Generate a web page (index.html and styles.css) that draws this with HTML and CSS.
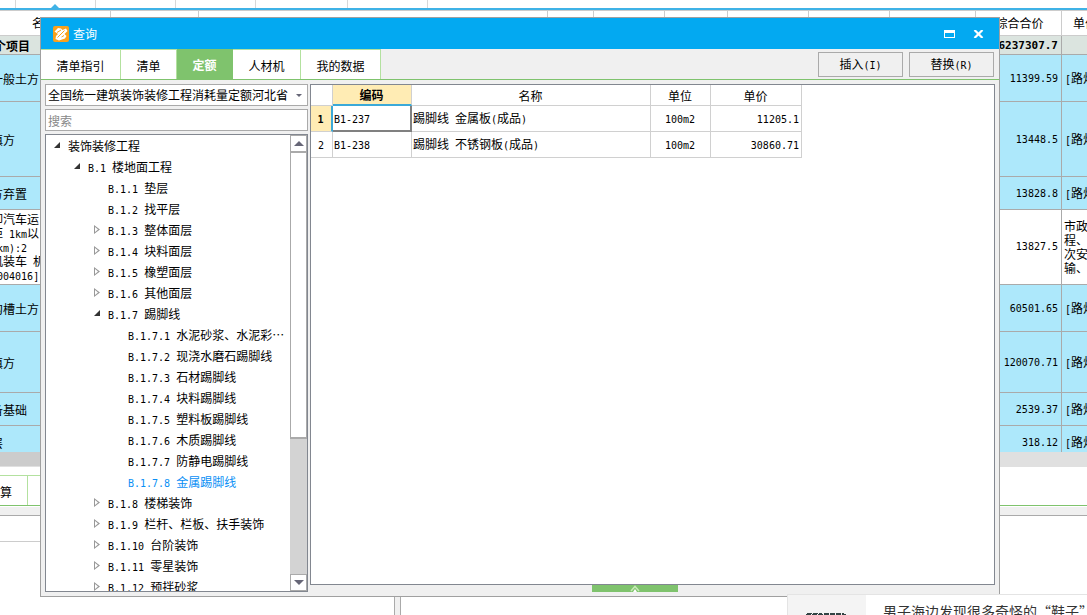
FILE: index.html
```html
<!DOCTYPE html>
<html lang="zh-CN">
<head>
<meta charset="utf-8">
<title>查询</title>
<link rel="stylesheet" href="styles.css">
</head>
<body>
<main class="app">
  <div class="app-tabs"><span class="w16"></span><span class="w80"></span><span class="w80"></span><span class="w80"></span><span class="w92"></span><span class="w80"></span>
    <svg class="app-marker" width="8" height="4" viewBox="0 0 8 4"><path d="M4 0L8 4H0z" fill="#3fb2e6"/></svg>
  </div>
  <table class="sheet">
    <colgroup><col class="c-name"><col class="c-88"><col class="c-wide"><col class="c-46"><col class="c-71"><col class="c-63"><col class="c-81"><col class="c-81"><col class="c-86"><col class="c-86"><col></colgroup>
    <thead><tr class="h25"><th class="name-head">名称</th><th></th><th></th><th></th><th></th><th></th><th></th><th></th><th></th><th class="sum-head">综合合价</th><th class="last-head">单价</th></tr></thead>
    <tbody>
      <tr class="h19 total"><td>个项目</td><td colspan="8"></td><td class="num">6237307.7</td><td></td></tr>
      <tr class="h47"><td>一般土方</td><td colspan="8"></td><td class="num">11399.59</td><td class="cost"><span class="m">[</span>路灯</td></tr>
      <tr class="h75"><td>填方</td><td colspan="8"></td><td class="num">13448.5</td><td class="cost"><span class="m">[</span>路灯</td></tr>
      <tr class="h33"><td>方弃置</td><td colspan="8"></td><td class="num">13828.8</td><td class="cost"><span class="m">[</span>路灯</td></tr>
      <tr class="h75 plain"><td><div>卸汽车运</div><div>距<span class="m"> 1km</span>以</div><div><span class="m">&nbsp;km):2</span></div><div>机装车<span class="m"> </span>机</div><div><span class="m">&nbsp;004016]</span></div></td><td colspan="8"></td><td class="num">13827.5</td><td class="cost"><div>市政</div><div>程、</div><div>次安</div><div>输、</div></td></tr>
      <tr class="h47"><td>沟槽土方</td><td colspan="8"></td><td class="num">60501.65</td><td class="cost"><span class="m">[</span>路灯</td></tr>
      <tr class="h61"><td>填方</td><td colspan="8"></td><td class="num">120070.71</td><td class="cost"><span class="m">[</span>路灯</td></tr>
      <tr class="h33"><td>备基础</td><td colspan="8"></td><td class="num">2539.37</td><td class="cost"><span class="m">[</span>路灯</td></tr>
      <tr class="h26"><td>层</td><td colspan="8"></td><td class="num">318.12</td><td class="cost"><span class="m">[</span>路灯</td></tr>
    </tbody>
  </table>
  <div class="sheet-scroll"><span></span></div>
  <div class="lower-tabs"><button type="button">算</button><span></span></div>
  <div class="lower-bar"></div>
  <div class="lower">
    <div class="lower-left"><div class="lower-head"></div></div>
    <div class="splitter"></div>
    <div class="lower-right"></div>
  </div>
</main>

<section class="dialog" role="dialog" aria-labelledby="dialog-title">
  <header class="titlebar">
    <svg width="16" height="16" viewBox="0 0 16 16"><rect width="16" height="16" rx="2" fill="#f9a11b"/><path d="M1.500 5.500L5 2L8 2.500L9.500 4L13 2.500L14.500 5L11.500 8L13.500 10L12 12.500L6 14.500L2.500 13L3 10L5 8z" fill="#fff"/><path d="M4 6.500L8 4M4.500 11.500L11.500 4.500M8.500 11L11 9.500" stroke="#f9a11b" fill="none"/></svg>
    <h1 id="dialog-title">查询</h1>
    <button type="button" class="win" aria-label="最大化"><svg width="11" height="8" viewBox="0 0 11 8"><path d="M0 0H11V8H0zM1 3V7H10V3z" fill="#fff" fill-rule="evenodd"/></svg></button>
    <button type="button" class="win close" aria-label="关闭"><svg width="11" height="8" viewBox="0 0 11 8"><path d="M1.500 0L9.500 8M9.500 0L1.500 8" stroke="#fff" stroke-width="2.200"/></svg></button>
  </header>
  <nav class="tabs">
    <button type="button" class="t80">清单指引</button><button type="button" class="t56">清单</button><button type="button" class="t56 active">定额</button><button type="button" class="t68">人材机</button><button type="button" class="t80">我的数据</button>
    <div class="actions"><button type="button">插入<span class="m">(I)</span></button><button type="button">替换<span class="m">(R)</span></button></div>
  </nav>
  <div class="content">
    <aside class="side">
      <div class="combo">
        <select aria-label="定额库"><option>全国统一建筑装饰装修工程消耗量定额河北省</option></select>
        <svg width="6" height="3" viewBox="0 0 6 3"><path d="M0 0H6L3 3z" fill="#667"/></svg>
      </div>
      <input class="search" type="text" placeholder="搜索" aria-label="搜索">
      <div class="tree-box">
        <ul class="tree">
          <li class="l0 open">装饰装修工程</li>
          <li class="l1 open"><span class="m">B.1 </span>楼地面工程</li>
          <li class="l2"><span class="m">B.1.1 </span>垫层</li>
          <li class="l2"><span class="m">B.1.2 </span>找平层</li>
          <li class="l2 shut"><span class="m">B.1.3 </span>整体面层</li>
          <li class="l2 shut"><span class="m">B.1.4 </span>块料面层</li>
          <li class="l2 shut"><span class="m">B.1.5 </span>橡塑面层</li>
          <li class="l2 shut"><span class="m">B.1.6 </span>其他面层</li>
          <li class="l2 open"><span class="m">B.1.7 </span>踢脚线</li>
          <li class="l3"><span class="m">B.1.7.1 </span>水泥砂浆、水泥彩…</li>
          <li class="l3"><span class="m">B.1.7.2 </span>现浇水磨石踢脚线</li>
          <li class="l3"><span class="m">B.1.7.3 </span>石材踢脚线</li>
          <li class="l3"><span class="m">B.1.7.4 </span>块料踢脚线</li>
          <li class="l3"><span class="m">B.1.7.5 </span>塑料板踢脚线</li>
          <li class="l3"><span class="m">B.1.7.6 </span>木质踢脚线</li>
          <li class="l3"><span class="m">B.1.7.7 </span>防静电踢脚线</li>
          <li class="l3 current"><span class="m">B.1.7.8 </span>金属踢脚线</li>
          <li class="l2 shut"><span class="m">B.1.8 </span>楼梯装饰</li>
          <li class="l2 shut"><span class="m">B.1.9 </span>栏杆、栏板、扶手装饰</li>
          <li class="l2 shut"><span class="m">B.1.10 </span>台阶装饰</li>
          <li class="l2 shut"><span class="m">B.1.11 </span>零星装饰</li>
          <li class="l2 shut"><span class="m">B.1.12 </span>预拌砂浆</li>
        </ul>
        <div class="scrollbar">
          <button type="button" aria-label="向上"><svg width="10" height="5" viewBox="0 0 10 5"><path d="M5 0L10 5H0z" fill="#667"/></svg></button>
          <div class="thumb"></div>
          <div class="track"></div>
          <button type="button" aria-label="向下"><svg width="10" height="5" viewBox="0 0 10 5"><path d="M0 0H10L5 5z" fill="#667"/></svg></button>
        </div>
      </div>
    </aside>
    <div class="main">
      <div class="results">
        <table class="grid">
          <colgroup><col class="g22"><col class="g79"><col class="g239"><col class="g60"><col class="g91"></colgroup>
          <thead><tr><th></th><th class="picked">编码</th><th>名称</th><th>单位</th><th>单价</th></tr></thead>
          <tbody>
            <tr><th class="row-on"><span class="m">1</span></th><td class="cell-on"><span class="m">B1-237</span></td><td>踢脚线<span class="m"> </span>金属板<span class="m">(</span>成品<span class="m">)</span></td><td class="mid"><span class="m">100m2</span></td><td class="right"><span class="m">11205.1</span></td></tr>
            <tr><th><span class="m">2</span></th><td><span class="m">B1-238</span></td><td>踢脚线<span class="m"> </span>不锈钢板<span class="m">(</span>成品<span class="m">)</span></td><td class="mid"><span class="m">100m2</span></td><td class="right"><span class="m">30860.71</span></td></tr>
          </tbody>
        </table>
      </div>
      <button type="button" class="handle" aria-label="展开"><svg width="10" height="7" viewBox="0 0 10 7"><path d="M1 6L5 1.500L9 6" fill="none" stroke="#c8eab8" stroke-width="1.500"/><path d="M5 4L7 7H3z" fill="#fff"/></svg></button>
    </div>
  </div>
</section>

<aside class="news">
  <div class="thumbnail"><svg width="40" height="2" viewBox="0 0 40 2"><path d="M1 .5H6M7 .5H16M18 .5H38M0 1.500H40" stroke="#344" stroke-dasharray="5 1"/></svg></div>
  <a href="#">男子海边发现很多奇怪的“鞋子”</a>
</aside>
</body>
</html>
```
FILE: styles.css
```css
* { box-sizing: border-box; }
html, body { height: 100%; }
body { margin: 0; overflow: hidden; position: relative; background: #fff; color: #000; font: 12px/14px "Noto Sans CJK SC", sans-serif; }
button, input, select { font: inherit; color: inherit; margin: 0; padding: 0; border: 0; border-radius: 0; background: none; }
svg { display: block; flex: none; }
.m, .num { font-family: "DejaVu Sans Mono", monospace; font-size: 10px; white-space: pre; }

.app { height: 100%; display: flex; flex-direction: column; overflow: hidden; }
.app-tabs { position: relative; display: flex; flex: none; height: 11px; border-bottom: 1px solid #ccc; }
.app-tabs::after { content: ""; position: absolute; left: 0; right: 0; top: 8px; height: 2px; background: #3fb2e6; }
.app-tabs span { border-right: 1px solid #d8d8d8; }
.w16 { width: 16px; }
.w80 { width: 80px; }
.w92 { width: 92px; }
.app-marker { position: absolute; left: 51px; top: 4px; }

.sheet { table-layout: fixed; width: 100%; flex: none; border-collapse: separate; border-spacing: 0; }
.sheet th, .sheet td { padding: 0; border-right: 1px solid #aaa; border-bottom: 1px solid #aaa; overflow: hidden; white-space: nowrap; text-align: left; vertical-align: middle; }
.sheet th { font-weight: 400; border-color: #ccc; }
.sheet td { background: #ade8fb; padding-top: 2px; }
.sheet th:last-child, .sheet td:last-child { border-right: 0; }
.sheet td:first-child { text-indent: -9px; }
.sheet .num { text-align: right; padding-right: 3px; }
.sheet .cost { padding-left: 3px; }
.sheet .plain td { background: #fff; padding-top: 0; }
.sheet .plain .cost { padding-left: 2px; }
.plain div { height: 14px; }
.sheet .total td { background: #dbe4df; font-weight: 700; }
.sheet .total .num { font-size: 11px; }
.sheet .total td:first-child { text-indent: -6px; }
.sheet .name-head { padding-left: 32px; }
.sheet .sum-head { text-align: center; padding-left: 2px; }
.sheet .last-head { padding-left: 11px; }
.c-name { width: 111px; }
.c-88 { width: 88px; }
.c-wide { width: 349px; }
.c-46 { width: 46px; }
.c-71 { width: 71px; }
.c-63 { width: 63px; }
.c-81 { width: 81px; }
.c-86 { width: 86px; }
.h19 { height: 19px; }
.h25 { height: 25px; }
.h26 { height: 26px; }
.sheet .h26 td { border-bottom: 0; padding-top: 8px; }
.h33 { height: 33px; }
.h47 { height: 47px; }
.h61 { height: 61px; }
.h75 { height: 75px; }
.sheet-scroll { flex: none; height: 15px; background: #e0e0e0; border-bottom: 1px solid #e0e0e0; }
.sheet-scroll span { display: block; height: 14px; width: 50%; background: #ccc; }
.lower-tabs { flex: none; display: flex; margin-top: 8px; height: 31px; border-bottom: 1px solid #7fc36d; }
.lower-tabs button { width: 28px; padding-top: 2px; text-align: left; border-top: 1px solid #b3e19f; border-right: 1px solid #b3e19f; }
.lower-tabs span { width: 80px; border-top: 1px solid #b3e19f; }
.lower-bar { flex: none; height: 10px; background: #f0f0f0; border-top: 1px solid #fff; border-bottom: 1px solid #aaa; }
.lower { flex: 1; display: flex; }
.lower-left { width: 394px; }
.lower-head { height: 26px; border-bottom: 1px solid #ccc; }
.splitter { width: 7px; background: #f0f0f0; border: solid #aaa; border-width: 0 1px; }
.lower-right { flex: 1; }

.dialog { position: absolute; left: 40px; right: 87px; top: 17px; bottom: 18px; display: flex; flex-direction: column; background: #f0f0f0; border: 1px solid #a0a0a0; }
.titlebar { flex: none; height: 31px; display: flex; align-items: center; padding: 0 15px 0 12px; background: #03a9f1; color: #fff; }
.titlebar h1 { margin: 0 auto 0 4px; font-size: 12px; font-weight: 400; line-height: 14px; }
.win { display: grid; place-items: center; width: 11px; height: 20px; }
.close { margin-left: 18px; }
.tabs { flex: none; height: 31px; display: flex; border-bottom: 1px solid #7fc36d; }
.tabs > button { background: #fff; border-top: 1px solid #b3e19f; border-right: 1px solid #b3e19f; padding-top: 3px; }
.tabs > .active { background: #7fc36d; border-color: #7fc36d; color: #fff; font-weight: 700; padding-top: 0; }
.t80 { width: 80px; }
.t56 { width: 56px; }
.t68 { width: 68px; }
.actions { margin-left: auto; padding: 3px 5px; display: flex; gap: 6px; }
.actions button { width: 85px; height: 25px; border: 1px solid #aaa; }

.content { flex: 1; min-height: 0; display: flex; gap: 2px; padding: 4px; }
.side { width: 263px; display: flex; flex-direction: column; gap: 3px; min-height: 0; }
.combo { position: relative; flex: none; height: 22px; }
.combo select { appearance: none; width: 100%; height: 22px; padding: 0 0 0 2px; background: #fff; border: 1px solid #aaa; }
.combo svg { position: absolute; right: 6px; top: 10px; pointer-events: none; }
.search { flex: none; width: 100%; height: 22px; padding: 0 2px; background: #fff; border: 1px solid #aaa; }
.search::placeholder { color: #888; opacity: 1; }
.tree-box { flex: 1; min-height: 0; display: flex; background: #fff; border: 1px solid #828790; }
.tree { flex: 1; min-width: 0; margin: 0; padding: 0; list-style: none; overflow: hidden; }
.tree li { position: relative; height: 21px; line-height: 21px; white-space: nowrap; }
.tree .m { line-height: 14px; }
.l0 { padding-left: 22px; }
.l1 { padding-left: 42px; }
.l2 { padding-left: 62px; }
.l3 { padding-left: 82px; }
.open::before, .shut::before { content: ""; position: absolute; top: 7px; width: 6px; height: 6px; }
.open::before { background: #333; clip-path: polygon(100% 0, 100% 100%, 0 100%); }
.shut::before { height: 9px; top: 6px; background: #999; clip-path: polygon(0 0, 100% 50%, 0 100%, 0 0, 1px 2px, 1px 7px, 4px 50%, 1px 2px); }
.l0::before { left: 8px; }
.l1::before { left: 28px; }
.l2::before { left: 48px; }
.current { color: #0a8ff5; }
.scrollbar { width: 17px; display: flex; flex-direction: column; background: #d3d3d3; }
.scrollbar button { display: grid; place-items: center; flex: none; height: 17px; border: 1px solid #aaa; background: #fff; }
.thumb { flex: 285 1 0; background: #fff; border: solid #aaa; border-width: 1px 1px 2px; }
.track { flex: 136 1 0; }

.main { flex: 1; min-width: 0; display: flex; flex-direction: column; }
.results { flex: 1; background: #fff; border: 1px solid #828790; }
.handle { flex: none; align-self: center; display: grid; justify-items: center; width: 86px; height: 7px; margin-right: 36px; background: #7fc36d; }
.grid { table-layout: fixed; width: 491px; border-collapse: separate; border-spacing: 0; }
.grid th, .grid td { height: 26px; padding: 1px 2px 0 1px; border-right: 1px solid #d0d0d0; border-bottom: 1px solid #d0d0d0; font-weight: 400; text-align: left; white-space: nowrap; }
.grid thead th { height: 21px; text-align: center; }
.grid tbody th, .grid .mid { text-align: center; }
.grid .right { text-align: right; }
.grid thead .picked { background: #ffecb4; font-weight: 700; border-bottom: 2px solid #3ba9d8; }
.grid tbody .row-on { background: #ffecb4; font-weight: 700; border-right: 2px solid #3ba9d8; }
.grid .cell-on { border-right: 2px solid #808080; border-bottom: 2px solid #808080; }
.g22 { width: 22px; }
.g79 { width: 79px; }
.g239 { width: 239px; }
.g60 { width: 60px; }
.g91 { width: 91px; }

.news { position: absolute; left: 787px; right: 0; bottom: 0; height: 21px; display: flex; overflow: hidden; background: #fff; border: solid #e4e4e4; border-width: 1px 0 0 1px; }
.thumbnail { flex: none; width: 78px; padding: 18px 0 0 18px; background: #f4f4f4; }
.news a { padding: 6px 0 0 17px; font-size: 14px; line-height: 20px; color: #333; text-decoration: none; white-space: nowrap; }
```
